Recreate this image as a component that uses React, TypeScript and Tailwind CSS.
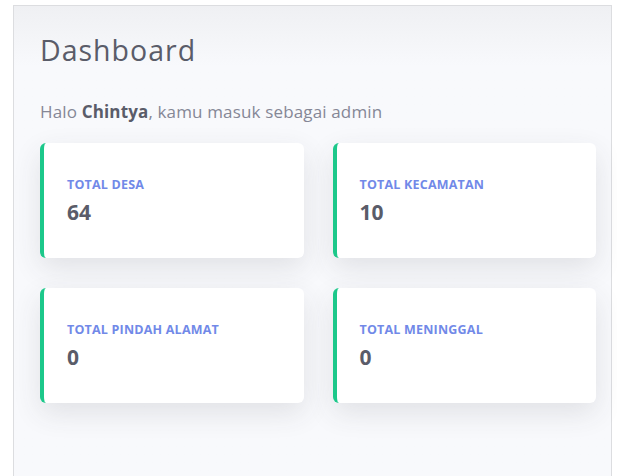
import React from 'react';

const stats = [
  { label: 'TOTAL DESA', value: '64' },
  { label: 'TOTAL KECAMATAN', value: '10' },
  { label: 'TOTAL PINDAH ALAMAT', value: '0' },
  { label: 'TOTAL MENINGGAL', value: '0' },
];

function StatCard({ label, value }: { label: string; value: string }) {
  return (
    <div className="h-[115px] bg-white rounded-md border-l-4 border-[#1cc88a] shadow-[0_10px_28px_rgba(58,59,69,0.12)] pl-[23px] pt-[36px]">
      <div className="text-[12.5px] font-bold tracking-[0.2px] text-[#7189e8] leading-none">{label}</div>
      <div className="mt-[11px] text-[21px] font-bold text-[#5a5c69] leading-none">{value}</div>
    </div>
  );
}

export default function App() {
  return (
    <div className="w-[617px] h-[476px] bg-white pl-[13px] pr-[5px] pt-[5px] font-['Open_Sans',sans-serif]">
      <div className="h-full bg-[#f8f9fc] border border-b-0 border-[#dcdde0] bg-gradient-to-b from-[#eff0f3] to-[#f8f9fc] to-[60px] pl-[26px] pr-[15px]">
        <h1 className="pt-[30px] text-[28.5px] tracking-[1px] leading-none text-[#5a5c69]">Dashboard</h1>
        <p className="mt-[38px] text-[17px] tracking-[0.15px] leading-none text-[#858796]">
          Halo <b className="text-[#5a5c69]">Chintya</b>, kamu masuk sebagai admin
        </p>
        <div className="mt-[23px] grid grid-cols-2 gap-x-[29px] gap-y-[30px]">
          {stats.map((s) => (
            <StatCard key={s.label} label={s.label} value={s.value} />
          ))}
        </div>
      </div>
    </div>
  );
}
